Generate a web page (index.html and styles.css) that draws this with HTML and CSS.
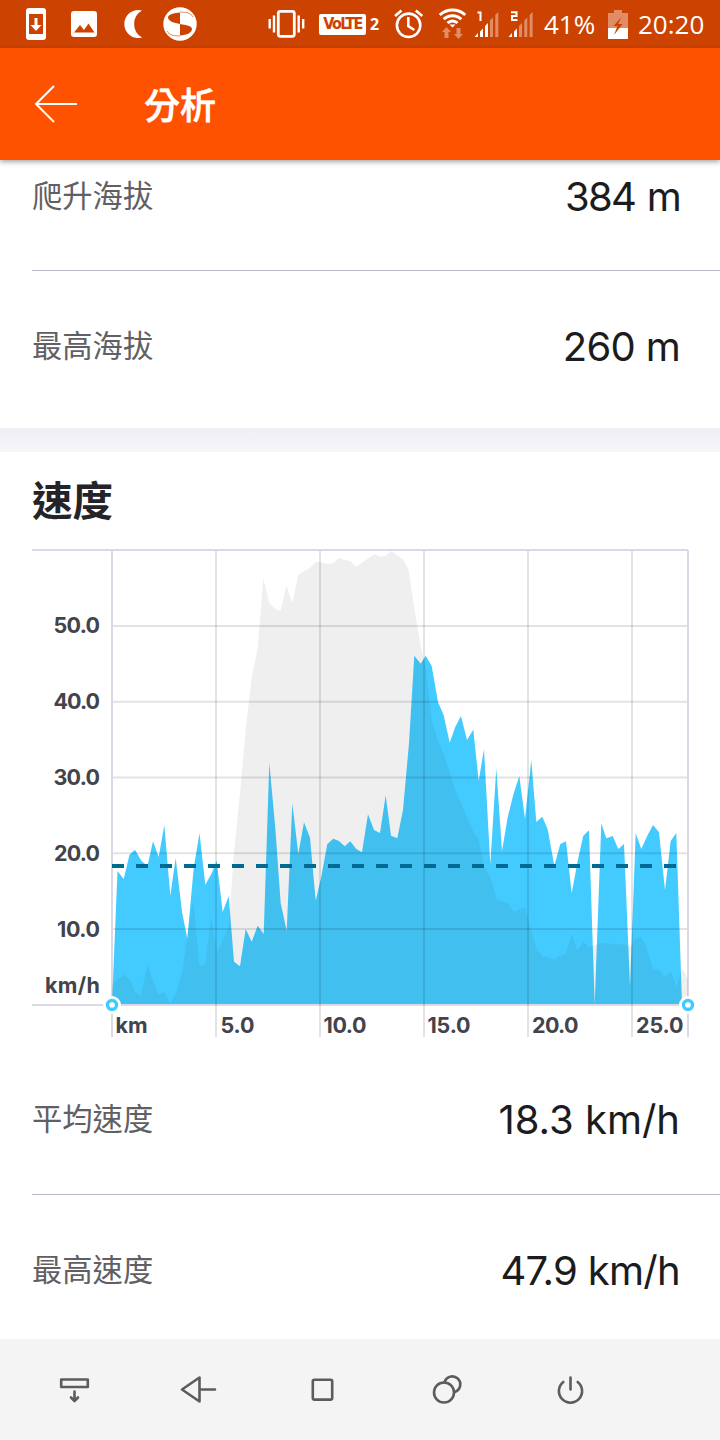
FILE: index.html
```html
<!DOCTYPE html>
<html lang="zh-Hant">
<head>
    <meta charset="UTF-8">
    <title>分析</title>
    <link rel="stylesheet" href="styles.css">
</head>
<body>
    <div class="status-bar">
        <svg class="icon-phone" width="20" height="48" viewBox="26 0 20 48">
            <path fill="#fff" fill-rule="evenodd" d="M29 8h14a3 3 0 0 1 3 3v26a3 3 0 0 1-3 3H29a3 3 0 0 1-3-3V11a3 3 0 0 1 3-3zM29 14v20h14V14z"/>
            <path fill="#fff" d="M34.500 18h3v7h4L36 31l-5.500-6h4z"/>
        </svg>
        <svg class="icon-image" width="26" height="48" viewBox="71 0 26 48">
            <rect x="71" y="11" width="26" height="26" rx="3" fill="#fff"/>
            <path class="cut" d="M74 32.500l6-7.500 4 5 4.500-6.500 6 9z"/>
        </svg>
        <svg class="icon-moon" width="20" height="48" viewBox="123 0 20 48">
            <path fill="#fff" d="M142 10.500a15.500 15.500 0 0 0 0 27A14 14 0 1 1 142 10.500z"/>
        </svg>
        <svg class="icon-ball" width="34" height="48" viewBox="163 0 34 48">
            <circle cx="180" cy="24" r="16.700" fill="#fff"/>
            <path class="cut" d="M180 12.500c-6 .5-12 2-12 5 0 3.500 6 5.500 12 6.500zM180 24v11.500c7-.5 12-3 12-6.500 0-3-6-4-12-5z"/>
            <path class="swirl" d="M180 12c6 0 11 1 13 5M180 36c-6 0-11-1-13-5"/>
        </svg>

        <svg class="icon-vibrate" width="37" height="48" viewBox="268 0 37 48">
            <rect x="278.300" y="11.300" width="16" height="25" rx="2" fill="none" stroke="#fff" stroke-width="2.800"/>
            <path d="M274 15.500v17M298.700 15.500v17M269.700 19v9.500M303.200 19v9.500" stroke="#fff" stroke-width="2.400"/>
        </svg>
        <span class="volte">VoLTE</span>
        <span class="volte-sim">2</span>
        <svg class="icon-alarm" width="30" height="48" viewBox="394 0 30 48">
            <g fill="none" stroke="#fff" stroke-width="2.600">
                <circle cx="408.600" cy="25.300" r="11.700"/>
                <path d="M395 16l6.500-5.500M415.800 10.500l6.500 5.500M408.300 17v9l6 4"/>
            </g>
        </svg>
        <svg class="icon-wifi" width="28" height="48" viewBox="439 0 28 48">
            <path d="M439.800 15a18.500 18.500 0 0 1 25.400 0M443.700 19.300a12.500 12.500 0 0 1 17.600 0M447.500 23a7 7 0 0 1 10 0" fill="none" stroke="#fff" stroke-width="3"/>
            <path d="M449.500 24.500h6l-3 3z" fill="#fff"/>
            <path class="dim" d="M446.500 27l4.500 5h-2.500v6h-4v-6H442zM458.500 39l4.500-5h-2.500v-6h-4v6H454z"/>
        </svg>
        <svg class="icon-signal" width="26" height="48" viewBox="474 0 26 48">
            <path d="M477.500 12.500h3v8.500" fill="none" stroke="#fff" stroke-width="2"/>
            <path fill="#fff" d="M474.500 37l3.500-4v4zM480 31.500l3-3V37h-3zM485 26l3-3v14h-3z"/>
            <path class="dim" d="M490 20.500l3-3V37h-3zM495.300 15l3-3v25h-3z"/>
        </svg>
        <svg class="icon-signal" width="26" height="48" viewBox="508 0 26 48">
            <path d="M511 12.200h5.500v3.800h-4.500v4h5.500" fill="none" stroke="#fff" stroke-width="2"/>
            <path fill="#fff" d="M508.500 37l3.500-4v4zM514 31.500l3-3V37h-3z"/>
            <path class="dim" d="M519 26l3-3v14h-3zM524.300 20.500l3-3V37h-3zM529.600 15l3-3v25h-3z"/>
        </svg>
        <span class="battery-text">41%</span>
        <svg class="icon-battery" width="20" height="48" viewBox="608 0 20 48">
            <path class="dim" d="M608 13h6v-3h8v3h6v15h-20z"/>
            <path fill="#fff" d="M608 28h20v11h-20z"/>
            <path class="cut" d="M621.500 17l-8 9h4l-3.500 9 8.500-11h-4.500z"/>
        </svg>
        <span class="clock">20:20</span>
    </div>

    <div class="app-bar">
        <svg width="46" height="40" viewBox="33 84 46 40">
            <path d="M54 86L36 104l18 18M36 104h41" fill="none" stroke="#fff" stroke-width="2"/>
        </svg>
        <h1>分析</h1>
    </div>

    <!-- Elevation -->
    <div class="stats stats-elevation">
        <div class="stat">
            <span class="label">爬升海拔</span>
            <span class="value elev-gain">384 m</span>
        </div>
        <div class="stat">
            <span class="label">最高海拔</span>
            <span class="value elev-max">260 m</span>
        </div>
    </div>

    <div class="section-gap"></div>

    <!-- Speed -->
    <h2>速度</h2>
    <svg class="chart" width="720" height="510" viewBox="0 540 720 510">
        <path class="frame" d="M32 550H688M112 550V1037M688 550V1037"/>
        <polygon class="speed" points="112,1004 117.5,871 123.7,879 129.5,854.7 135,849.7 141.3,860.7 147.5,866 153,841.3 158.7,857 164.3,825 170.3,895.7 175.7,858 182,911.7 187.3,938.7 193.7,868 199.5,833.3 205.3,884.7 211.3,874 216.7,860.7 222.7,912 228.7,896 234,961.7 240,966.3 245.7,929 251.7,941.7 257.7,925.7 263.7,934 269.3,762.7 275.3,828 280.7,903.3 286.7,930.7 292.3,803.3 298.3,854 304,822.3 310,837.7 315.7,900.7 321.3,876.7 327.3,844 333.3,838.7 339,841 344.7,846.3 350.3,841.3 356.3,849 362,852.3 368,814.3 374,830 380,833 385.7,795.3 391,835.7 397.3,838.3 403,810 409,743.3 414.3,655.7 420.7,663.7 425.7,655.7 431.7,666 438,702 443.7,715.3 449.7,742.7 455.3,726.7 461,716 467,740 473.3,729.7 478.7,781 484,749 490.3,864.3 496.3,768.3 502,851 507.7,817.3 513.3,794.7 519.3,776 525,818.7 531.3,760 536.3,822 542.3,816.7 547.7,829.3 554.3,866 560.3,844 566,841.3 571.7,893.3 577.7,860.7 583.3,835.7 589,830.3 594.7,1004 601.3,823.3 606.3,838.3 612.7,836 618.3,849 624,844 630,986 635.7,833.3 641.3,849 647.3,835.7 653,825 659,832.3 665,890.3 670.7,841 676.3,833 682,1004"/>
        <polygon class="elevation" points="112,1004 112,986 118,979 123.7,974.7 129.7,979.3 135.3,992.3 141.3,995.7 147.3,964 153,980.7 158.7,994.7 164.3,991.7 170.3,1003.7 176,993.3 182,973.3 187.3,937 193.3,900 199.3,966 205.3,964 211,916.7 217.3,952.7 228.7,926 234.3,850 240,793 246,727 251.7,677 257.7,648 263.3,578.3 269.3,603.3 275,608.7 280.7,611 286.3,585.7 292.3,603 298.3,575.3 304,571 310,568 315.3,562 320.7,562.3 327.3,564.3 333.3,563.3 339,557.7 344.7,560 350.3,561 356.3,566.7 374,554.3 379.7,556.7 385.7,555.7 391.3,551 397,555.3 403,559.3 408.7,570.7 414.3,608.3 420.7,646 426,670 432,721.7 437.7,740 443.7,754.3 455.3,790 473.3,831.7 478.7,840 484.3,866.7 490.3,877.3 497,900 508,903 514,912 525,907 530,926.7 536.7,949.3 542.3,956.3 548.7,957 554.3,960 560.3,955.7 566,953.7 571.7,933.7 577.3,950.7 583.3,941.7 589,947.3 600.7,943 625,944.7 630,947 635.7,939 641.3,936.7 647,949 653,970.3 659,970 665,977.3 670.7,971.3 676.7,987.3 682.3,967.7 688,980 688,1004"/>
        <path class="frame" d="M32 1005H688"/>
        <path class="grid" d="M113 626H687M113 701.700H687M113 777.500H687M113 853.300H687M113 929H687"/>
        <path class="grid" d="M216 551V1037M320 551V1037M424 551V1037M528 551V1037M632 551V1037"/>
        <path class="average" d="M112 866H677"/>
        <circle class="handle-halo" cx="112" cy="1005" r="9"/>
        <circle class="handle-halo" cx="688" cy="1005" r="9"/>
        <circle class="handle" cx="112" cy="1005" r="4.500"/>
        <circle class="handle" cx="688" cy="1005" r="4.500"/>

        <g class="axis axis-y">
            <text x="100" y="633" textLength="46.500">50.0</text>
            <text x="100" y="709" textLength="46.500">40.0</text>
            <text x="100" y="785" textLength="46.500">30.0</text>
            <text x="100" y="861" textLength="46">20.0</text>
            <text x="100" y="937" textLength="43">10.0</text>
            <text x="100" y="993" textLength="55">km/h</text>
        </g>
        <g class="axis">
            <text x="115.500" y="1033" textLength="32">km</text>
            <text x="220.500" y="1033" textLength="34">5.0</text>
            <text x="323.500" y="1033" textLength="43">10.0</text>
            <text x="427.500" y="1033" textLength="43">15.0</text>
            <text x="532" y="1033" textLength="46.500">20.0</text>
            <text x="636" y="1033" textLength="47.500">25.0</text>
        </g>
    </svg>

    <div class="stats stats-speed">
        <div class="stat">
            <span class="label">平均速度</span>
            <span class="value speed-avg">18.3 km/h</span>
        </div>
        <div class="stat">
            <span class="label">最高速度</span>
            <span class="value speed-max">47.9 km/h</span>
        </div>
    </div>

    <div class="nav-bar">
        <svg width="40" height="34" viewBox="54 1373 40 34">
            <path d="M61.200 1379.500h26.600v7.500H61.200zM74.500 1391.500v9M71 1397.500l3.500 3.500 3.500-3.500"/>
        </svg>
        <svg width="40" height="34" viewBox="178 1373 40 34">
            <path d="M199.500 1377.500v24L182 1389.500zM199.500 1389.500H215"/>
        </svg>
        <svg width="40" height="34" viewBox="302 1373 40 34">
            <rect x="312.800" y="1379.700" width="19.400" height="19.900" rx="1.500"/>
        </svg>
        <svg width="40" height="34" viewBox="426 1373 40 34">
            <circle cx="444" cy="1392.500" r="10"/>
            <path d="M444.500 1382.500a8 8 0 1 1 10.200 9.500"/>
        </svg>
        <svg width="40" height="34" viewBox="550 1373 40 34">
            <path d="M570.500 1377.500v12M563.300 1382a11.600 11.600 0 1 0 14.400 0"/>
        </svg>
    </div>
</body>
</html>
```

FILE: styles.css
```css
* {
    box-sizing: border-box;
}

body {
    margin: 0;
    width: 720px;
    height: 1440px;
    overflow: hidden;
    display: flex;
    flex-direction: column;
    background-color: #fff;
    font-family: Inter, "Noto Sans CJK TC", sans-serif;
}

svg {
    display: block;
    flex: none;
}

/* Status bar */
.status-bar {
    height: 48px;
    flex: none;
    display: flex;
    align-items: center;
    padding-left: 26px;
    background-color: #cc4200;
    color: #fff;
    font-family: "Open Sans", sans-serif;
    white-space: nowrap;
}

.cut {
    fill: #cc4200;
}

.dim {
    fill: #fff;
    opacity: 0.4;
}

.swirl {
    fill: none;
    stroke: #cc4200;
    opacity: 0.6;
}

.icon-image {
    margin-left: 25px;
}

.icon-moon {
    margin-left: 26px;
}

.icon-ball {
    margin-left: 20px;
}

.icon-vibrate {
    margin-left: 71px;
}

.volte {
    width: 47px;
    height: 21px;
    margin-left: 14px;
    border-radius: 2px;
    background-color: #fff;
    color: #cc4200;
    font: bold 16px/20px "DejaVu Sans Condensed", "DejaVu Sans", sans-serif;
    font-stretch: condensed;
    letter-spacing: -1.6px;
    text-align: center;
}

.volte-sim {
    width: 10px;
    margin-left: 4px;
    font-size: 16px;
    font-weight: bold;
}

.icon-alarm {
    margin-left: 14px;
}

.icon-wifi {
    margin-left: 15px;
}

.icon-signal {
    margin-left: 7px;
}

.icon-signal + .icon-signal {
    margin-left: 8px;
}

.battery-text {
    width: 56px;
    margin-left: 10px;
    padding-bottom: 1px;
    font-size: 26px;
}

.icon-battery {
    margin-left: 8px;
}

.clock {
    margin-left: 10px;
    padding-bottom: 1px;
    font-size: 26px;
}

/* App bar */
.app-bar {
    height: 112px;
    flex: none;
    display: flex;
    align-items: center;
    padding-left: 33px;
    background-color: #ff5200;
    box-shadow: 0 2px 5px rgba(0, 0, 0, 0.35);
    z-index: 1;
}

h1 {
    margin: 0 0 0 65px;
    padding-top: 3px;
    color: #fff;
    font-size: 36px;
    font-weight: 500;
    line-height: 50px;
    -webkit-text-stroke: 0.6px #fff;
}

/* Stat rows */
.stats {
    flex: none;
    padding-left: 32px;
}

.stats-elevation {
    height: 268px;
}

.stats-speed {
    height: 289px;
}

.stat {
    display: flex;
    justify-content: space-between;
    align-items: center;
    height: 150px;
    padding-right: 40px;
}

.stats-elevation .stat:first-child {
    height: 111px;
    padding-bottom: 39px;
    border-bottom: 1px solid #bbb9c9;
}

.stats-speed .stat:first-child {
    height: 145px;
    padding-bottom: 6px;
    border-bottom: 1px solid #bbb9c9;
}

.label {
    color: #606064;
    font-size: 30.3px;
    line-height: 40px;
}

.value {
    padding-top: 2px;
    color: #1c1c20;
    font-size: 40px;
    line-height: 48px;
}

.elev-gain {
    letter-spacing: -1.7px;
    word-spacing: 2px;
}

.elev-max,
.speed-max {
    letter-spacing: -0.7px;
}

.section-gap {
    height: 24px;
    flex: none;
    background: linear-gradient(#efeff4, #f6f6f9);
}

h2 {
    flex: none;
    height: 88px;
    margin: 0;
    padding: 20px 0 0 32px;
    color: #242428;
    font-size: 40.5px;
    font-weight: bold;
    line-height: 60px;
}

/* Chart */
.frame {
    fill: none;
    stroke: #dad9e5;
    stroke-width: 2;
}

.speed {
    fill: #43cbff;
}

.elevation {
    fill: #333;
    fill-opacity: 0.078;
}

.grid {
    fill: none;
    stroke: #000;
    stroke-opacity: 0.11;
    stroke-width: 2;
}

.average {
    fill: none;
    stroke: #006a92;
    stroke-width: 4;
    stroke-dasharray: 12 12;
}

.handle-halo {
    fill: #fff;
}

.handle {
    fill: #fff;
    stroke: #43cbff;
    stroke-width: 3.4;
}

.axis {
    fill: #43434c;
    font-size: 21.5px;
    font-weight: 700;
}

.axis-y {
    text-anchor: end;
}

/* Navigation bar */
.nav-bar {
    height: 101px;
    flex: none;
    display: flex;
    align-items: center;
    gap: 84px;
    padding-left: 54px;
    background-color: #f4f4f4;
}

.nav-bar svg {
    fill: none;
    stroke: #5c5c5c;
    stroke-width: 2.6;
    stroke-linejoin: round;
    stroke-linecap: round;
}
```
